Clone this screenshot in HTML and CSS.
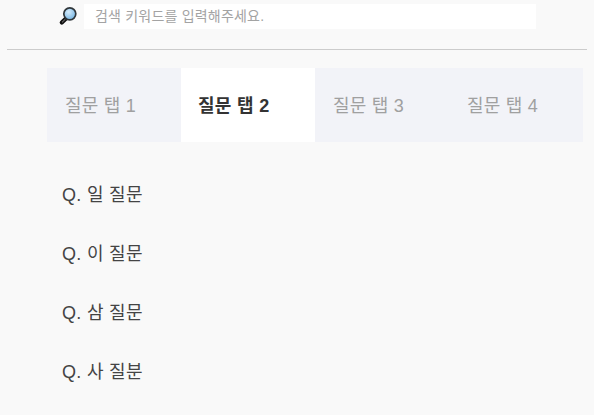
FILE: index.html
```html
<!DOCTYPE html>
<html lang="ko">
<head>
    <meta charset="UTF-8">
    <title>질문 탭</title>
    <link rel="stylesheet" href="styles.css">
</head>
<body>
    <div class="search-bar">
        <svg class="search-icon" width="22" height="22" viewBox="0 0 22 22">
            <defs>
                <radialGradient id="lens" cx="0.4" cy="0.35" r="0.75">
                    <stop offset="0" stop-color="#d6ecfb"/>
                    <stop offset="1" stop-color="#6aaee0"/>
                </radialGradient>
            </defs>
            <path d="M8.5 12 L3.8 16.6" stroke="#111" stroke-width="4.2" stroke-linecap="round"/>
            <path d="M7.5 13 L4 16.4" stroke="#8a8a8a" stroke-width="1"/>
            <circle cx="11.8" cy="7.8" r="6" fill="url(#lens)" stroke="#30363a" stroke-width="1.7"/>
        </svg>
        <input class="search-input" type="text" placeholder="검색 키워드를 입력해주세요.">
    </div>
    <hr class="divider">
    <ul class="tabs">
        <li class="tab">질문 탭 1</li>
        <li class="tab active">질문 탭 2</li>
        <li class="tab">질문 탭 3</li>
        <li class="tab">질문 탭 4</li>
    </ul>
    <ul class="questions">
        <li>Q. 일 질문</li>
        <li>Q. 이 질문</li>
        <li>Q. 삼 질문</li>
        <li>Q. 사 질분</li>
    </ul>
</body>
</html>
```

FILE: styles.css
```css
* {
    box-sizing: border-box;
    margin: 0;
    padding: 0;
    font-family: "Liberation Sans", "Noto Sans CJK KR", sans-serif;
}

body {
    background-color: #f9f9f9;
    color: #333;
    overflow: hidden;
}

.search-bar {
    display: flex;
    align-items: center;
    height: 25px;
    margin-top: 4px;
    padding-left: 58px;
    width: 536px;
}

.search-icon {
    flex: none;
    margin-right: 4px;
}

.search-input {
    flex: 1;
    height: 25px;
    padding: 0 0 2px 11px;
    border: none;
    outline: none;
    background-color: white;
    font-size: 14px;
    letter-spacing: 0.2px;
}

.search-input::placeholder {
    color: #a3a3a3;
    opacity: 1;
}

.divider {
    height: 1px;
    margin: 20px 7px 18px;
    border: none;
    background-color: #ccc;
}

.tabs {
    display: flex;
    height: 74px;
    margin-left: 47px;
    width: 536px;
    list-style: none;
    background-color: #f2f3f8;
}

.tab {
    width: 134px;
    padding-left: 18px;
    line-height: 76px;
    font-size: 18px;
    letter-spacing: 0.2px;
    color: #a0a0a0;
}

.tab.active {
    padding-left: 17px;
    background-color: white;
    color: #333;
    font-weight: bold;
    letter-spacing: 0.3px;
}

.questions {
    margin: 24px 0 0 62px;
    list-style: none;
}

.questions li {
    height: 59px;
    line-height: 59px;
    font-size: 18px;
    letter-spacing: 0.3px;
    color: #444;
}
```
